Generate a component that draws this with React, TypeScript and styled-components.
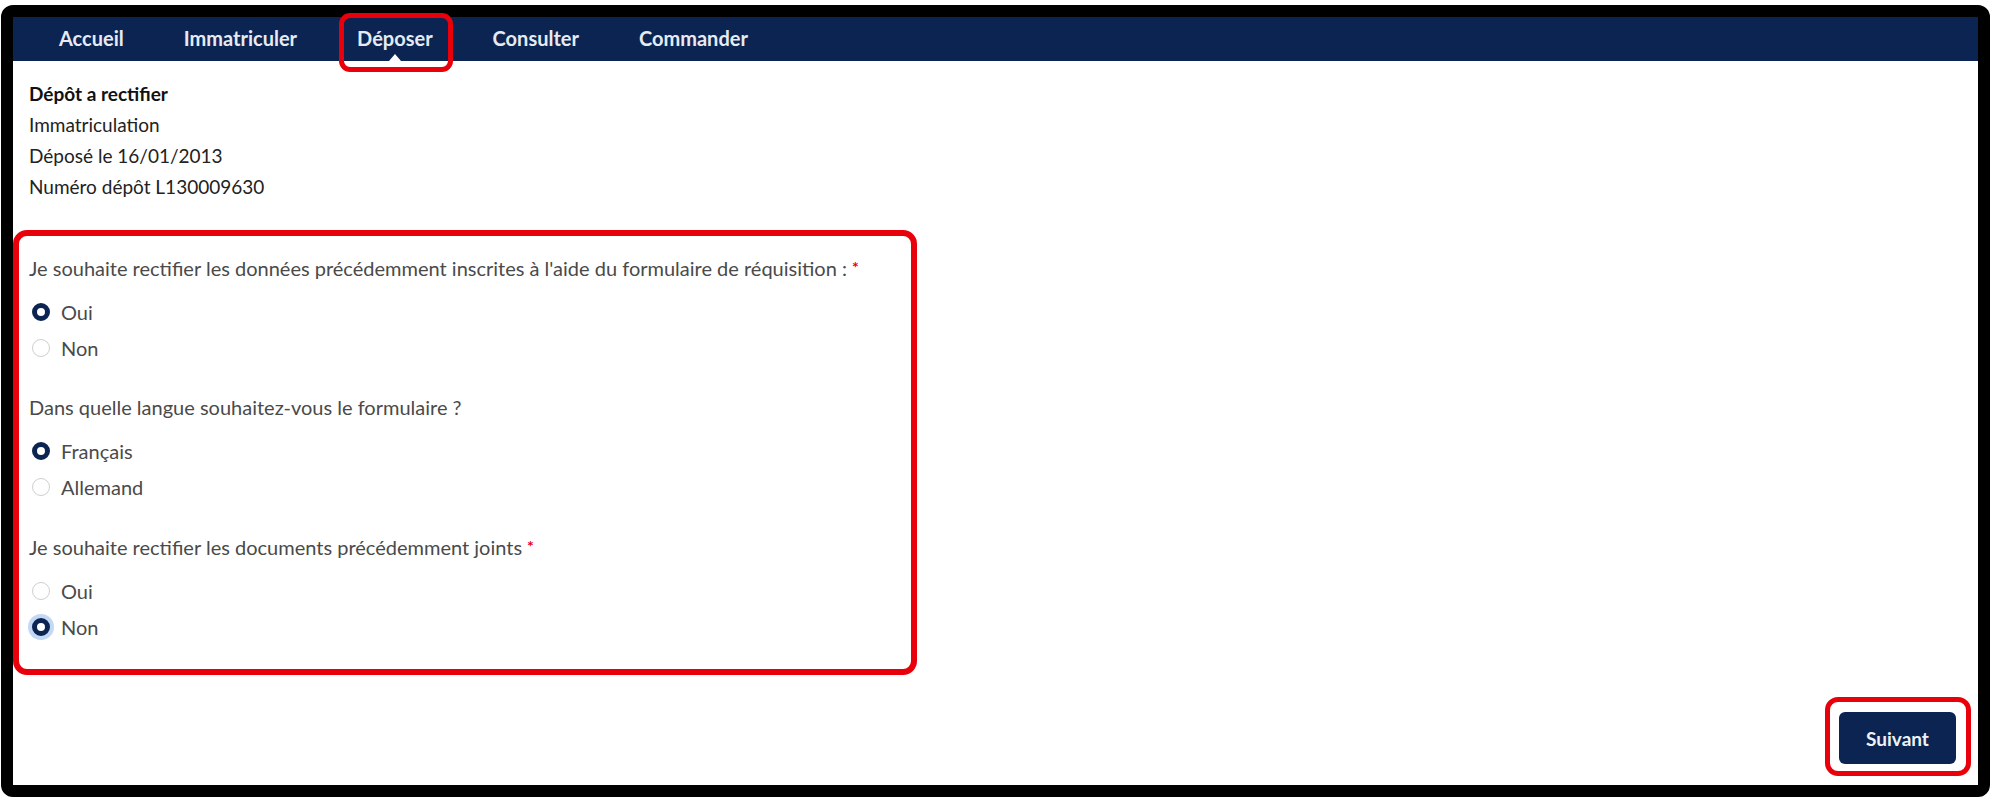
import React, { useState } from "react";
import styled, { createGlobalStyle } from "styled-components";

const Colors = {
  navy: "#0b2452",
  annotation: "#e8000b",
  text: "#222222",
  muted: "#4a4a4a",
  radioBorder: "#cfcfcf",
  focus: "#c2d8f3",
};

const GlobalStyle = createGlobalStyle`
  html, body {
    margin: 0;
    padding: 0;
    background: #ffffff;
  }
  body {
    font-family: Lato, "Liberation Sans", sans-serif;
    color: ${Colors.text};
  }
`;

const navItems = ["Accueil", "Immatriculer", "Déposer", "Consulter", "Commander"];

interface Question {
  id: string;
  label: string;
  required?: boolean;
  options: string[];
}

const questions: Question[] = [
  {
    id: "donnees",
    label:
      "Je souhaite rectifier les données précédemment inscrites à l'aide du formulaire de réquisition :",
    required: true,
    options: ["Oui", "Non"],
  },
  {
    id: "langue",
    label: "Dans quelle langue souhaitez-vous le formulaire ?",
    options: ["Français", "Allemand"],
  },
  {
    id: "documents",
    label: "Je souhaite rectifier les documents précédemment joints",
    required: true,
    options: ["Oui", "Non"],
  },
];

export default function App() {
  const [answers, setAnswers] = useState<Record<string, string>>({
    donnees: "Oui",
    langue: "Français",
    documents: "Non",
  });

  return (
    <>
      <GlobalStyle />
      <Frame>
        <NavBar>
          {navItems.map((item) => (
            <NavItem key={item} $active={item === "Déposer"}>
              {item}
              {item === "Déposer" && <NavHighlight />}
            </NavItem>
          ))}
        </NavBar>

        <Content>
          <InfoBlock>
            <InfoTitle>Dépôt a rectifier</InfoTitle>
            <InfoLine>Immatriculation</InfoLine>
            <InfoLine>Déposé le 16/01/2013</InfoLine>
            <InfoLine>Numéro dépôt L130009630</InfoLine>
          </InfoBlock>

          <FormBox>
            {questions.map((q) => (
              <QuestionGroup key={q.id}>
                <QuestionLabel>
                  {q.label}
                  {q.required && <Required>*</Required>}
                </QuestionLabel>
                {q.options.map((opt) => {
                  const checked = answers[q.id] === opt;
                  return (
                    <OptionRow
                      key={opt}
                      onClick={() => setAnswers({ ...answers, [q.id]: opt })}
                    >
                      <RadioDot
                        $checked={checked}
                        $focused={q.id === "documents" && checked}
                      />
                      <OptionLabel>{opt}</OptionLabel>
                    </OptionRow>
                  );
                })}
              </QuestionGroup>
            ))}
          </FormBox>
        </Content>

        <Footer>
          <NextButton>
            Suivant
            <ButtonHighlight />
          </NextButton>
        </Footer>
      </Frame>
    </>
  );
}

const Frame = styled.div`
  box-sizing: border-box;
  margin: 5px 1px 0 1px;
  height: 792px;
  border: 12px solid #000;
  border-radius: 12px;
  display: flex;
  flex-direction: column;
  background: #fff;
`;

const NavBar = styled.nav`
  height: 44px;
  flex-shrink: 0;
  background: ${Colors.navy};
  display: flex;
  align-items: stretch;
  gap: 60px;
  padding-left: 46px;
`;

const NavItem = styled.div<{ $active: boolean }>`
  position: relative;
  display: flex;
  align-items: center;
  color: #e6ebf2;
  font-size: 20px;
  font-weight: 700;
  padding-bottom: 2px;

  &::after {
    content: "";
    display: ${({ $active }) => ($active ? "block" : "none")};
    position: absolute;
    left: 50%;
    bottom: 0;
    transform: translateX(-50%);
    border-left: 6px solid transparent;
    border-right: 6px solid transparent;
    border-bottom: 7px solid #fff;
  }
`;

const NavHighlight = styled.span`
  position: absolute;
  left: -18px;
  right: -20px;
  top: -4px;
  bottom: -11px;
  border: 5px solid ${Colors.annotation};
  border-radius: 11px;
`;

const Content = styled.main`
  flex: 1;
  padding-top: 17px;
`;

const InfoBlock = styled.section`
  padding-left: 16px;
  margin-bottom: 28px;
`;

const InfoTitle = styled.div`
  font-size: 19px;
  font-weight: 700;
  line-height: 31px;
  color: #111;
`;

const InfoLine = styled.div`
  font-size: 19px;
  line-height: 31px;
  color: ${Colors.text};
`;

const FormBox = styled.section`
  box-sizing: border-box;
  width: 904px;
  border: 6px solid ${Colors.annotation};
  border-radius: 14px;
  padding: 19px 10px 24px 10px;
`;

const QuestionGroup = styled.div`
  & + & {
    margin-top: 29px;
  }
`;

const QuestionLabel = styled.div`
  font-size: 20px;
  line-height: 24px;
  color: ${Colors.muted};
  margin-bottom: 14px;
`;

const Required = styled.span`
  color: ${Colors.annotation};
  font-size: 16px;
  font-weight: 700;
  vertical-align: 3px;
  margin-left: 5px;
`;

const OptionRow = styled.label`
  display: flex;
  align-items: center;
  height: 36px;
  gap: 11px;
  padding-left: 3px;
  cursor: pointer;
`;

const RadioDot = styled.span<{ $checked: boolean; $focused: boolean }>`
  box-sizing: border-box;
  width: 18px;
  height: 18px;
  border-radius: 50%;
  flex-shrink: 0;
  background: #fff;
  border: ${({ $checked }) =>
    $checked ? `5px solid ${Colors.navy}` : `1px solid ${Colors.radioBorder}`};
  box-shadow: ${({ $focused }) => ($focused ? `0 0 0 4px ${Colors.focus}` : "none")};
`;

const OptionLabel = styled.span`
  font-size: 20px;
  color: ${Colors.muted};
`;

const Footer = styled.footer`
  display: flex;
  justify-content: flex-end;
  padding: 0 22px 21px 0;
`;

const NextButton = styled.button`
  position: relative;
  width: 117px;
  height: 52px;
  border: none;
  border-radius: 6px;
  background: ${Colors.navy};
  color: #eef2f7;
  font-family: Lato, "Liberation Sans", sans-serif;
  font-size: 19px;
  font-weight: 700;
  cursor: pointer;
`;

const ButtonHighlight = styled.span`
  position: absolute;
  left: -14px;
  right: -15px;
  top: -15px;
  bottom: -12px;
  border: 5px solid ${Colors.annotation};
  border-radius: 13px;
  pointer-events: none;
`;
